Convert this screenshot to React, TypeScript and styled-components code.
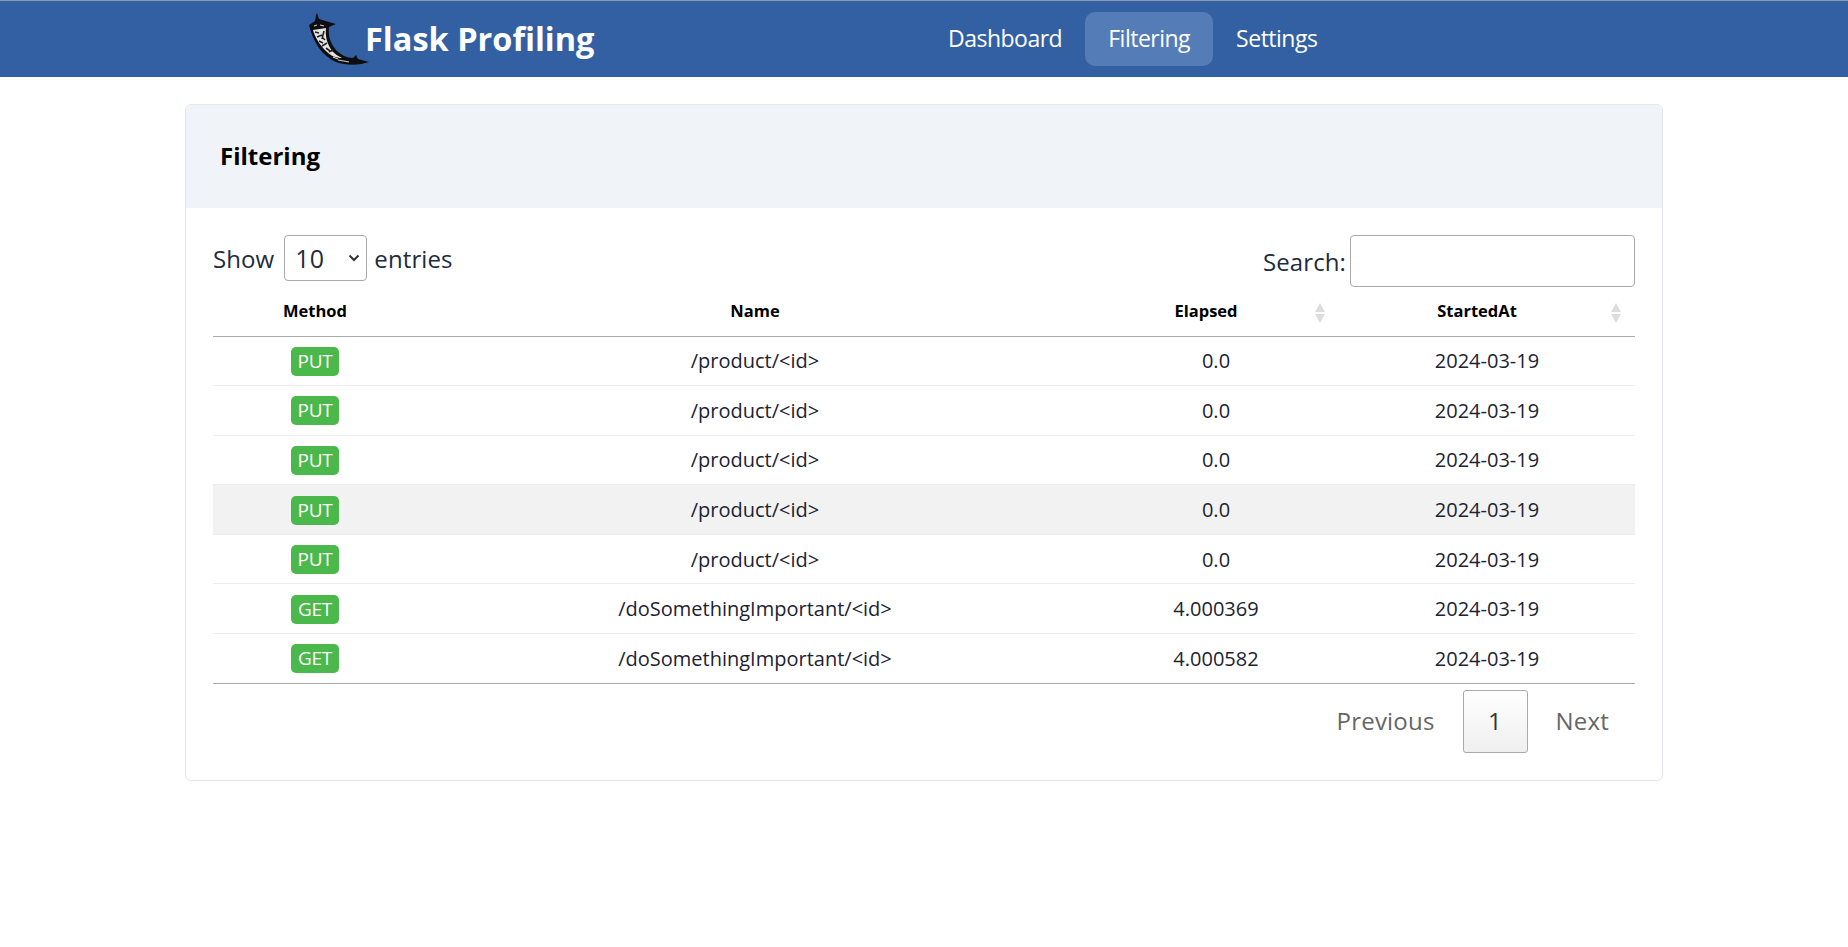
import React from "react";
import styled, { createGlobalStyle } from "styled-components";

const FONT = `"Open Sans", "Noto Sans", "Liberation Sans", sans-serif`;

type Row = {
  method: string;
  name: string;
  elapsed: string;
  startedAt: string;
  highlighted?: boolean;
};

const rows: Row[] = [
  { method: "PUT", name: "/product/<id>", elapsed: "0.0", startedAt: "2024-03-19" },
  { method: "PUT", name: "/product/<id>", elapsed: "0.0", startedAt: "2024-03-19" },
  { method: "PUT", name: "/product/<id>", elapsed: "0.0", startedAt: "2024-03-19" },
  { method: "PUT", name: "/product/<id>", elapsed: "0.0", startedAt: "2024-03-19", highlighted: true },
  { method: "PUT", name: "/product/<id>", elapsed: "0.0", startedAt: "2024-03-19" },
  { method: "GET", name: "/doSomethingImportant/<id>", elapsed: "4.000369", startedAt: "2024-03-19" },
  { method: "GET", name: "/doSomethingImportant/<id>", elapsed: "4.000582", startedAt: "2024-03-19" },
];

const GlobalStyle = createGlobalStyle`
  html, body {
    margin: 0;
    padding: 0;
    background: #fff;
    font-family: ${FONT};
    color: #212529;
  }
  * {
    box-sizing: border-box;
  }
`;

const Header = styled.header`
  height: 77px;
  background-color: #3360a3;
  border-top: 1px solid #8a9ab0;
  display: flex;
  align-items: center;
  padding: 0 0 0 305px;
`;

const Brand = styled.a`
  display: flex;
  align-items: center;
  width: 620px;
  color: #fff;
  font-size: 32.5px;
  font-weight: 700;
`;

const BrandText = styled.span`
  margin: 0 0 2px -6px;
`;

const Nav = styled.nav`
  display: flex;
  align-items: center;
`;

const NavItem = styled.a<{ $active?: boolean }>`
  display: block;
  height: 54px;
  line-height: 52px;
  padding: 0 23px;
  border-radius: 10px;
  color: #fff;
  font-size: 23px;
  letter-spacing: -0.5px;
  background-color: ${(p) => (p.$active ? "#547db7" : "transparent")};
`;

const Main = styled.main`
  padding: 27px 185px 0;
`;

const Card = styled.section`
  width: 1478px;
  height: 677px;
  border: 1px solid #e3e6ea;
  border-radius: 6px;
  overflow: hidden;
`;

const CardHeader = styled.div`
  height: 103px;
  background-color: #f0f3f7;
  display: flex;
  align-items: center;
  padding: 0 0 2px 34px;
  font-size: 24px;
  font-weight: 700;
  color: #000;
`;

const CardBody = styled.div`
  padding: 0 27px;
`;

const Controls = styled.div`
  display: flex;
  justify-content: space-between;
  align-items: flex-start;
  height: 81px;
  padding-top: 27px;
  font-size: 24px;
  letter-spacing: 0.1px;
  color: #212b3d;
`;

const LengthLabel = styled.label`
  display: flex;
  align-items: center;
  height: 46px;
  gap: 8px;
`;

const FakeSelect = styled.div`
  width: 83px;
  height: 46px;
  margin: 0 -1px 0 2px;
  border: 1px solid #aaa;
  border-radius: 4px;
  padding: 0 6px 0 10px;
  display: flex;
  align-items: center;
  justify-content: space-between;
  color: #212b3d;
  font-size: 25px;
`;

const SearchLabel = styled.label`
  display: flex;
  align-items: center;
  gap: 4px;
`;

const SearchInput = styled.input`
  width: 285px;
  height: 52px;
  border: 1px solid #aaa;
  border-radius: 4px;
  background: #fff;
`;

const Table = styled.table`
  width: 100%;
  table-layout: fixed;
  border-collapse: collapse;
  border-bottom: 1px solid #aaa;
`;

const HeadCell = styled.th<{ $sortable?: boolean }>`
  position: relative;
  height: 47px;
  padding: 0 ${(p) => (p.$sortable ? "20px" : "0")} 4px 0;
  font-size: 16.5px;
  font-weight: 700;
  text-align: center;
  color: #000;
  border-bottom: 1px solid #aaa;
`;

const SortIcons = styled.svg`
  position: absolute;
  right: 14px;
  top: 14px;
`;

const BodyRow = styled.tr<{ $highlighted?: boolean }>`
  height: 49.6px;
  background-color: ${(p) => (p.$highlighted ? "#f2f2f2" : "transparent")};
  border-top: 1px solid #eee;

  &:first-child {
    border-top: none;
  }
`;

const Cell = styled.td`
  padding: 0;
  text-align: center;
  font-size: 20px;
  color: #1c2333;
`;

const MethodBadge = styled.span`
  display: inline-block;
  height: 29px;
  line-height: 29px;
  padding: 0 6.5px;
  border-radius: 5px;
  background-color: #4bb84b;
  color: #fff;
  font-size: 19px;
  letter-spacing: -0.2px;
  vertical-align: middle;
`;

const Pagination = styled.div`
  display: flex;
  justify-content: flex-end;
  align-items: center;
  margin: 6px -2px 0 0;
  font-size: 24px;
  letter-spacing: 0.2px;
`;

const PageLink = styled.a`
  padding: 0 28px 2px;
  color: #666;
`;

const PageCurrent = styled.a`
  width: 65px;
  height: 63px;
  display: flex;
  align-items: center;
  justify-content: center;
  padding-bottom: 2px;
  border: 1px solid #aaa;
  border-radius: 3px;
  color: #333;
  background: linear-gradient(to bottom, #fff 0%, #efefef 100%);
`;

const FlaskHorn = () => (
  <svg width="66" height="58" viewBox="0 0 66 58">
    {/* silhouette */}
    <path
      d="M4 15 L10 11 L11 5 L12 3 L14 9 L24 12 L31 14 L24 17 C23 25 25 33 31 40 C36 45 42 48 48 48 L51 45 L53 49 L64 52 C56 55 42 56 31 52 C17 46 8 32 4 15 Z"
      fill="#0e0e12"
    />
    {/* light body of the horn */}
    <path
      d="M8 20 L21 18 C20 26 22 34 27 41 C30 44 33 46 37 48 C31 48 26 46 21 41 C14 34 10 27 8 20 Z"
      fill="#e4e4e4"
    />
    {/* engraved marks */}
    <path
      d="M10 22 L14 23 M12 27 L17 25 M14 31 L18 33 M17 36 L22 33 M21 38 L25 41 M24 42 L28 40 M17 27 L20 30 M19 21 L17 29"
      stroke="#222"
      strokeWidth="1.6"
      fill="none"
    />
    <path
      d="M9 16 L12 15 M15 15 L19 16 M33 50 L44 52 M28 47 L33 49"
      stroke="#c9c9c9"
      strokeWidth="1.2"
      fill="none"
    />
  </svg>
);

const SelectChevron = () => (
  <svg width="12" height="8" viewBox="0 0 12 8">
    <path d="M1.5 1.5 L6 6 L10.5 1.5" fill="none" stroke="#333" strokeWidth="2" />
  </svg>
);

const SortArrows = () => (
  <SortIcons width="10" height="20" viewBox="0 0 10 20">
    <path d="M5 0 L10 9 H0 Z" fill="#dcdcdc" />
    <path d="M0 11 H10 L5 20 Z" fill="#dcdcdc" />
  </SortIcons>
);

export default function App() {
  return (
    <>
      <GlobalStyle />
      <Header>
        <Brand>
          <FlaskHorn />
          <BrandText>Flask Profiling</BrandText>
        </Brand>
        <Nav>
          <NavItem>Dashboard</NavItem>
          <NavItem $active>Filtering</NavItem>
          <NavItem>Settings</NavItem>
        </Nav>
      </Header>
      <Main>
        <Card>
          <CardHeader>Filtering</CardHeader>
          <CardBody>
            <Controls>
              <LengthLabel>
                Show
                <FakeSelect>
                  10
                  <SelectChevron />
                </FakeSelect>
                entries
              </LengthLabel>
              <SearchLabel>
                Search:
                <SearchInput type="search" />
              </SearchLabel>
            </Controls>
            <Table>
              <colgroup>
                <col width="204" />
                <col width="676" />
                <col width="246" />
                <col width="296" />
              </colgroup>
              <thead>
                <tr>
                  <HeadCell>Method</HeadCell>
                  <HeadCell>Name</HeadCell>
                  <HeadCell $sortable>
                    Elapsed
                    <SortArrows />
                  </HeadCell>
                  <HeadCell $sortable>
                    StartedAt
                    <SortArrows />
                  </HeadCell>
                </tr>
              </thead>
              <tbody>
                {rows.map((row, i) => (
                  <BodyRow key={i} $highlighted={row.highlighted}>
                    <Cell>
                      <MethodBadge>{row.method}</MethodBadge>
                    </Cell>
                    <Cell>{row.name}</Cell>
                    <Cell>{row.elapsed}</Cell>
                    <Cell>{row.startedAt}</Cell>
                  </BodyRow>
                ))}
              </tbody>
            </Table>
            <Pagination>
              <PageLink>Previous</PageLink>
              <PageCurrent>1</PageCurrent>
              <PageLink>Next</PageLink>
            </Pagination>
          </CardBody>
        </Card>
      </Main>
    </>
  );
}
